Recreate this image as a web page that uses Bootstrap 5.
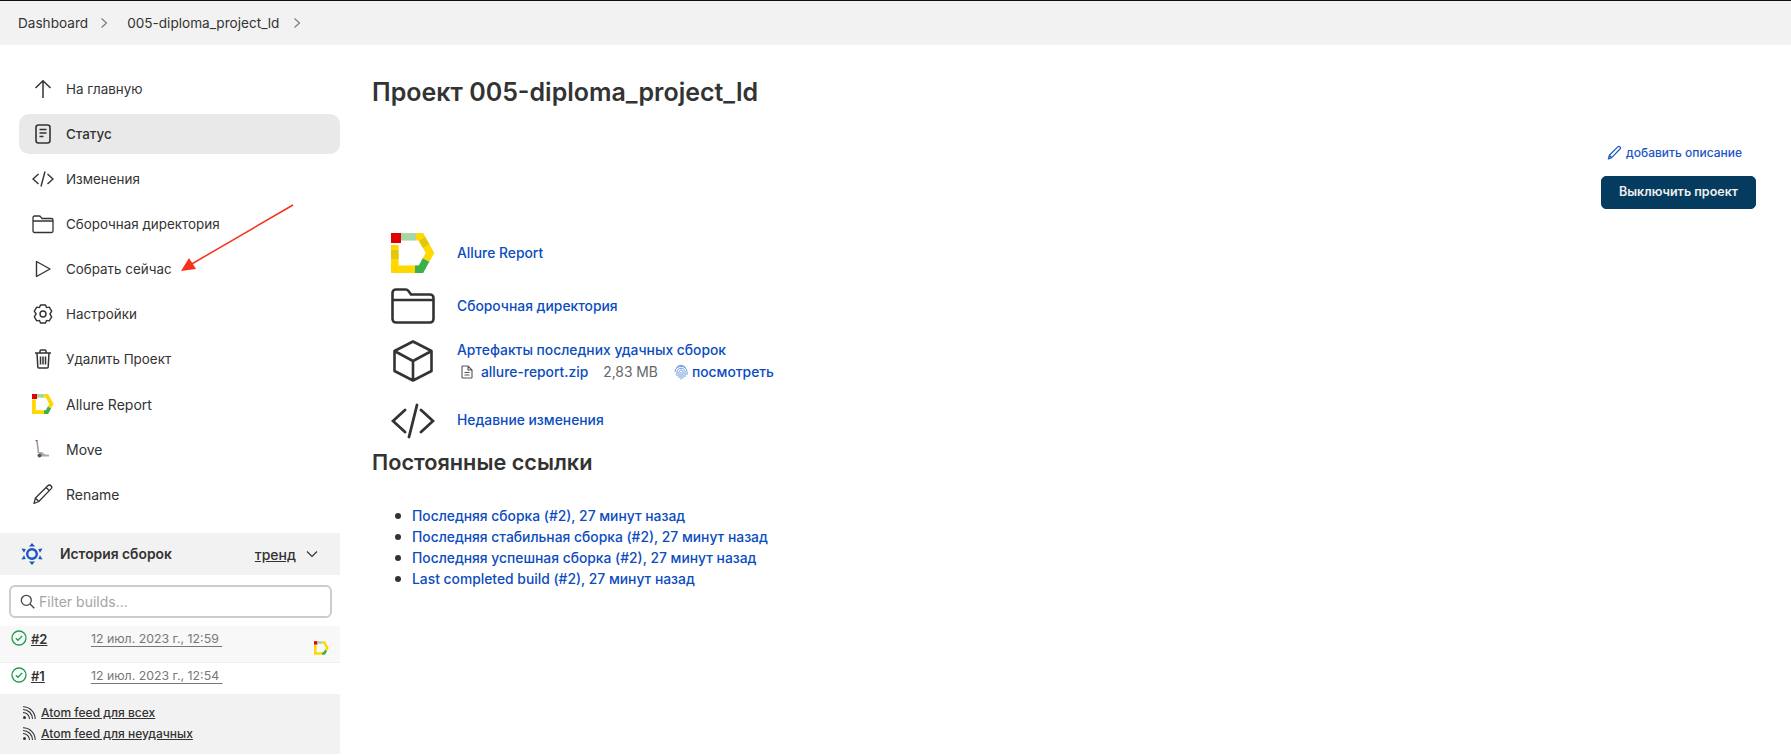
<!DOCTYPE html>
<html lang="en">
  <head>
    <meta charset="UTF-8" />
    <title>005-diploma_project_ld</title>
    <link href="https://cdn.jsdelivr.net/npm/bootstrap@5.3.3/dist/css/bootstrap.min.css" rel="stylesheet" />
    <style>
      body { font-family: Inter, "Noto Sans", sans-serif; color: #333; background: #fff; height: 756px; overflow: hidden; position: relative; font-size: 13.85px; border-top: 1px solid #111; }
      a { color: inherit; }
      svg { display: block; flex-shrink: 0; }
      .crumbs { height: 44px; background: #f2f2f2; padding-left: 18px; font-size: 13.6px; font-weight: 400; }
      .crumb-sep { margin: 0 19px 0 12px; }
      .crumb-sep-b { margin-left: 14px; }
      .side-col { width: 340px; flex-shrink: 0; }
      .side-menu { padding: 24px 0 0 19px; height: 488px; }
      .side-item { height: 40px; margin-bottom: 5px; padding-left: 13px; gap: 12px; border-radius: 10px; text-decoration: none; font-weight: 400; color: #333; font-size: 13.4px; }
      .side-item.is-latin { font-size: 14px; }
      .side-item.is-active { background: #e9e9e9; font-weight: 500; }
      .side-ico { width: 22px; height: 22px; }
      .hist-head { height: 42px; background: #f2f2f2; padding: 0 22px 0 20px; font-weight: 600; }
      .hist-title { margin-left: 16px; }
      .hist-trend { font-weight: 500; margin-right: 10px; margin-left: auto; text-decoration: underline; font-size: 14px; }
      .filter-box { margin: 10px 8px 8px 9px; height: 33px; border: 2px solid #c6ced4; border-radius: 6px; padding-left: 9px; gap: 4px; }
      .filter-box input { border: 0; outline: 0; background: none; padding: 0; width: 270px; font-size: 14px; font-family: inherit; }
      .filter-box input::placeholder { color: #a5a5a5; }
      .build-row { padding-left: 11px; font-size: 13px; position: relative; }
      .build-a { height: 37px; background: #f8f8f8; padding-top: 4px; border-bottom: 1px solid #f0f0f0; }
      .build-b { height: 31px; padding-top: 4px; }
      .build-num { font-weight: 600; margin-left: 4px; width: 60px; text-decoration: underline; color: #333; }
      .build-date { color: #777; text-decoration: underline; text-underline-offset: 3px; white-space: pre; font-size: 12.3px; }
      .build-flag { margin-left: auto; margin-right: 11px; margin-top: 11px; }
      .feeds { height: 60px; background: #f2f2f2; padding: 9px 0 0 22px; font-size: 12px; font-weight: 500; }
      .feed-line { height: 20.500px; gap: 5px; }
      .main-col { padding: 0 35px 0 32px; }
      .page-title { font-size: 25px; font-weight: 600; line-height: 30px; margin: 32px 0 0; color: #333; }
      .desc-link { color: #1a56c4; font-size: 12px; font-weight: 500; gap: 4px; margin: 37px 14px 0 0; height: 17px; text-decoration: none; }
      .off-btn { background: #053b5f; border-color: #053b5f; color: #f0f0f0; font-size: 12.500px; font-weight: 600; width: 155px; height: 33px; padding: 0; margin-top: 15px; border-radius: 5px; }
      .off-btn:hover { background: #053b5f; color: #f0f0f0; }
      .link-tbl { margin-top: 24px; padding-left: 19px; }
      .link-row { gap: 22px; }
      .link-ico { width: 44px; }
      .folder-row { margin-top: 15px; }
      .art-row { margin-top: 16px; }
      .code-row { margin-top: 20px; }
      .blue-link { color: #0b4cbe; font-weight: 500; text-decoration: none; }
      .art-sub { color: #666; margin-top: 1px; margin-left: 4px; }
      .art-size { margin-left: 15px; }
      .perma-title { font-size: 21.700px; font-weight: 600; line-height: 27px; margin: 10px 0 30px; color: #333; }
      .perma-list { padding-left: 40px; margin: 0; line-height: 21px; list-style: none; }
      .perma-list li::before { content: ""; display: inline-block; width: 6px; height: 6px; border-radius: 50%; background: #333; margin: 0 11px 2px -17px; vertical-align: middle; }
      .arrow-over { position: absolute; left: 175px; top: 200px; }
    </style>
  </head>

  <body>
    <nav class="crumbs d-flex align-items-center">
      <span>Dashboard</span>
      <svg class="crumb-sep" width="8" height="12" viewBox="0 0 8 12" fill="none" stroke="#777" stroke-width="1.1"><path d="M1.5 1.5 6.5 6 1.5 10.5"/></svg>
      <span>005-diploma_project_ld</span>
      <svg class="crumb-sep-b" width="8" height="12" viewBox="0 0 8 12" fill="none" stroke="#777" stroke-width="1.1"><path d="M1.5 1.5 6.5 6 1.5 10.5"/></svg>
    </nav>

    <div class="d-flex">
      <aside class="side-col">
        <div class="side-menu">
          <a class="side-item d-flex align-items-center" href="#">
            <svg class="side-ico" viewBox="0 0 22 22" fill="none" stroke="#333" stroke-width="1.5"><path d="M11 20V3M3.5 10 11 2.8 18.5 10"/></svg>
            На главную
          </a>
          <a class="side-item is-active d-flex align-items-center" href="#">
            <svg class="side-ico" viewBox="0 0 22 22" fill="none" stroke="#333" stroke-width="1.6"><rect x="4" y="2" width="14" height="18" rx="2.5"/><path d="M7.5 6.5h7M7.5 10h7M7.5 13.500h4"/></svg>
            Статус
          </a>
          <a class="side-item d-flex align-items-center" href="#">
            <svg class="side-ico" viewBox="0 0 22 22" fill="none" stroke="#333" stroke-width="1.4"><path d="M6.500 6 1 11l5.500 5M15.500 6 21 11l-5.500 5M13 3.500 9 18.500"/></svg>
            Изменения
          </a>
          <a class="side-item d-flex align-items-center" href="#">
            <svg class="side-ico" viewBox="0 0 22 22" fill="none" stroke="#333" stroke-width="1.3"><path d="M1 6V4.500C1 3.700 1.700 3 2.500 3h4.800c.6 0 1 .3 1.400.8L10 5.500h9.500c.8 0 1.500.7 1.500 1.500v11c0 .8-.7 1.500-1.500 1.500h-17C1.700 19.500 1 18.800 1 18zM1 8h20"/></svg>
            Сборочная директория
          </a>
          <a class="side-item d-flex align-items-center" href="#">
            <svg class="side-ico" viewBox="0 0 22 22" fill="none" stroke="#333" stroke-width="1.4" stroke-linejoin="round"><path d="M4.500 3.500v15L18 11z"/></svg>
            Собрать сейчас
          </a>
          <a class="side-item d-flex align-items-center" href="#">
            <svg class="side-ico" viewBox="0 0 22 22" fill="none" stroke="#333" stroke-width="1.4" stroke-linejoin="round"><path d="M8.500 2h5l1 2.600 2.700-.5 2.500 4.100-1.800 2.800 1.800 2.800-2.500 4.100-2.700-.5-1 2.600h-5l-1-2.600-2.700.5-2.500-4.100L4.100 11 2.300 8.200l2.500-4.100 2.700.5z"/><circle cx="11" cy="11" r="3"/></svg>
            Настройки
          </a>
          <a class="side-item d-flex align-items-center" href="#">
            <svg class="side-ico" viewBox="0 0 22 22" fill="none" stroke="#333" stroke-width="1.5"><path d="M3 5h16M8 5V3c0-.6.400-1 1-1h4c.6 0 1 .4 1 1v2M5 5l.8 14c0 .6.500 1 1.200 1h8c.7 0 1.200-.4 1.200-1L17 5M8.500 8.500v8M11 8.500v8M13.500 8.500v8"/></svg>
            Удалить Проект
          </a>
          <a class="side-item is-latin d-flex align-items-center" href="#">
            <svg class="side-ico" viewBox="0 0 44 40" fill="none" stroke-width="7.500"><path d="M3.800 40V11M3 36.200h25" stroke="#ffd800"/><path d="M0 5h10" stroke="#e30000" stroke-width="10"/><path d="M10 3.800h15" stroke="#a8d5a5"/><path d="M25 3.800h5l9 16.200-4 7" stroke="#ffd800"/><path d="M35 27l-5 9.200h-6" stroke="#3cae4a"/></svg>
            Allure Report
          </a>
          <a class="side-item is-latin d-flex align-items-center" href="#">
            <svg class="side-ico" viewBox="0 0 22 22" fill="none"><path d="M3.500 2.500 6 3" stroke="#c33" stroke-width="1.200"/><path d="M5 3l1.500 12" stroke="#999" stroke-width="1.500"/><path d="M7 14h3l3 2.500h4v2H8.500z" fill="#aaa"/><circle cx="7.500" cy="17.500" r="2" fill="#555"/></svg>
            Move
          </a>
          <a class="side-item is-latin d-flex align-items-center" href="#">
            <svg class="side-ico" viewBox="0 0 22 22" fill="none" stroke="#333" stroke-width="1.300" stroke-linejoin="round"><path d="M2 20.500 3.500 15 15.800 2.700c.9-.9 2.300-.9 3.200 0s.9 2.300 0 3.200L6.800 18.500zM3.500 15l3.300 3.500M14 4.500l3.500 3.300"/></svg>
            Rename
          </a>
        </div>

        <div class="hist-head d-flex align-items-center">
          <svg width="24" height="24" viewBox="0 0 24 24" fill="#1a56c4"><circle cx="12" cy="12" r="4.800" fill="none" stroke="#1a56c4" stroke-width="2.400"/><path d="M12 1l3 3.500H9zM12 23l3-3.500H9zM1.500 6.500l4.300.5-1.800 3.800zM22.500 6.500l-4.300.5 1.800 3.800zM1.500 17.500l4.300-.5-1.800-3.800zM22.500 17.500l-4.300-.5 1.800-3.800z"/></svg>
          <span class="hist-title">История сборок</span>
          <span class="hist-trend">тренд</span>
          <svg width="12" height="8" viewBox="0 0 12 8" fill="none" stroke="#333" stroke-width="1.200"><path d="M1 1.500 6 6.500 11 1.500"/></svg>
        </div>
        <div class="filter-box d-flex align-items-center">
          <svg width="15" height="15" viewBox="0 0 15 15" fill="none" stroke="#444" stroke-width="1.300"><circle cx="6.300" cy="6.300" r="5"/><path d="m10 10 4.300 4.300"/></svg>
          <input type="text" placeholder="Filter builds..." />
        </div>
        <div class="build-row build-a d-flex">
          <svg width="16" height="16" viewBox="0 0 16 16" fill="none" stroke="#1f9d4d" stroke-width="1.300"><circle cx="8" cy="8" r="7"/><path d="M4.800 8.200 7 10.300l4.200-4.400"/></svg>
          <a class="build-num" href="#">#2</a>
          <span class="build-date">12 июл. 2023 г., 12:59 </span>
          <svg class="build-flag" width="15" height="14" viewBox="0 0 44 40" fill="none" stroke-width="7.500"><path d="M3.800 40V11M3 36.200h25" stroke="#ffd800"/><path d="M0 5h10" stroke="#e30000" stroke-width="10"/><path d="M10 3.800h15" stroke="#a8d5a5"/><path d="M25 3.800h5l9 16.200-4 7" stroke="#ffd800"/><path d="M35 27l-5 9.200h-6" stroke="#3cae4a"/></svg>
        </div>
        <div class="build-row build-b d-flex">
          <svg width="16" height="16" viewBox="0 0 16 16" fill="none" stroke="#1f9d4d" stroke-width="1.300"><circle cx="8" cy="8" r="7"/><path d="M4.800 8.200 7 10.300l4.200-4.400"/></svg>
          <a class="build-num" href="#">#1</a>
          <span class="build-date">12 июл. 2023 г., 12:54 </span>
        </div>
        <div class="feeds">
          <div class="feed-line d-flex align-items-center">
            <svg width="14" height="14" viewBox="0 0 14 14" fill="none" stroke="#333" stroke-width="1.100"><circle cx="2.500" cy="11.500" r="1.500" fill="#333" stroke="none"/><path d="M1 6.500c3.600 0 6.500 2.900 6.500 6.500M1 3.500c5.300 0 9.500 4.200 9.500 9.500M1 .8c6.800 0 12.200 5.400 12.200 12.200"/></svg>
            <a href="#">Atom feed для всех</a>
          </div>
          <div class="feed-line d-flex align-items-center">
            <svg width="14" height="14" viewBox="0 0 14 14" fill="none" stroke="#333" stroke-width="1.100"><circle cx="2.500" cy="11.500" r="1.500" fill="#333" stroke="none"/><path d="M1 6.500c3.600 0 6.500 2.900 6.500 6.500M1 3.500c5.300 0 9.500 4.200 9.500 9.500M1 .8c6.800 0 12.200 5.400 12.200 12.200"/></svg>
            <a href="#">Atom feed для неудачных</a>
          </div>
        </div>
      </aside>

      <main class="main-col flex-grow-1">
        <h1 class="page-title">Проект 005-diploma_project_ld</h1>
        <div class="d-flex flex-column align-items-end">
          <a class="desc-link d-flex align-items-center" href="#">
            <svg width="15" height="15" viewBox="0 0 22 22" fill="none" stroke="#1a56c4" stroke-width="1.800" stroke-linejoin="round"><path d="M2 20.500 3.500 15 15.800 2.700c.9-.9 2.300-.9 3.200 0s.9 2.300 0 3.200L6.800 18.500zM3.500 15l3.300 3.500"/></svg>
            добавить описание
          </a>
          <button class="btn off-btn" type="button">Выключить проект</button>
        </div>

        <div class="link-tbl">
          <div class="link-row d-flex align-items-center">
            <svg class="link-ico" width="44" height="40" viewBox="0 0 44 40" fill="none" stroke-width="7.500"><path d="M3.800 12V40M3 36.200h25" stroke="#ffd800"/><path d="M3.800 17v9" stroke="#e3c70c"/><path d="M0 5h10" stroke="#e30000" stroke-width="10"/><path d="M10 3.800h15" stroke="#a8d5a5"/><path d="M25 3.800h5l9 16.200-4 7" stroke="#ffd800"/><path d="M31 6l4 7" stroke="#e3c70c"/><path d="M35 27l-5 9.200h-6" stroke="#3cae4a"/></svg>
            <a class="blue-link" href="#">Allure Report</a>
          </div>
          <div class="link-row folder-row d-flex align-items-center">
            <svg class="link-ico" width="44" height="36" viewBox="0 0 44 36" fill="none" stroke="#333" stroke-width="2.600"><path d="M1.500 11V5C1.500 3 3 1.500 5 1.500h9.500c1.500 0 2.300.5 3.200 1.700L20 6.500h19c2 0 3.500 1.500 3.500 3.500v21c0 2-1.500 3.500-3.500 3.500H5c-2 0-3.500-1.500-3.500-3.500z"/><path d="M1.500 12h41"/></svg>
            <a class="blue-link" href="#">Сборочная директория</a>
          </div>
          <div class="link-row art-row d-flex align-items-center">
            <svg class="link-ico" width="44" height="42" viewBox="0 0 44 42" fill="none" stroke="#333" stroke-width="2.600" stroke-linejoin="round"><path d="M22 1.500 40.500 11v20L22 40.500 3.500 31V11zM3.500 11 22 21l18.500-10M22 21v19.500"/></svg>
            <div>
              <a class="blue-link" href="#">Артефакты последних удачных сборок</a>
              <div class="art-sub d-flex align-items-center">
                <svg width="12" height="14" viewBox="0 0 12 14" fill="none" stroke="#555" stroke-width="1.100"><path d="M1 1.500c0-.3.200-.5.500-.5H7l4 4v7.500c0 .3-.2.500-.5.500h-9a.5.5 0 0 1-.5-.5zM7 1v4h4M3.500 7.500h5M3.500 10h5"/></svg>
                <a class="blue-link ms-2" href="#">allure-report.zip</a>
                <span class="art-size">2,83 MB</span>
                <svg class="ms-3" width="14" height="16" viewBox="0 0 14 16" fill="none" stroke="#5b8fd8" stroke-width=".9"><path d="M2.500 3.500c2.500-3 6.500-3 9 0M1 8c0-7.500 12-7.500 12 0v3M3 12V8c0-5 8-5 8 0v5M5 14V8c0-2.500 4-2.500 4 0v6.500M7 8v7.500"/></svg>
                <a class="blue-link ms-1" href="#">посмотреть</a>
              </div>
            </div>
          </div>
          <div class="link-row code-row d-flex align-items-center">
            <svg class="link-ico" width="44" height="36" viewBox="0 0 44 36" fill="none" stroke="#333" stroke-width="2.800" stroke-linecap="round"><path d="M14 7 2 18l12 11M30 7l12 11-12 11M26 2 18 34"/></svg>
            <a class="blue-link" href="#">Недавние изменения</a>
          </div>
        </div>

        <h2 class="perma-title">Постоянные ссылки</h2>
        <ul class="perma-list">
          <li><a class="blue-link" href="#">Последняя сборка (#2), 27 минут назад</a></li>
          <li><a class="blue-link" href="#">Последняя стабильная сборка (#2), 27 минут назад</a></li>
          <li><a class="blue-link" href="#">Последняя успешная сборка (#2), 27 минут назад</a></li>
          <li><a class="blue-link" href="#">Last completed build (#2), 27 минут назад</a></li>
        </ul>
      </main>
    </div>

    <svg class="arrow-over" width="125" height="75" viewBox="0 0 125 75" fill="none"><path d="M118 4 15 64" stroke="#f5321c" stroke-width="1.500"/><path d="M6 70 14 57 21 68z" fill="#f5321c"/></svg>

    <script src="https://cdn.jsdelivr.net/npm/bootstrap@5.3.3/dist/js/bootstrap.bundle.min.js"></script>
  </body>
</html>
